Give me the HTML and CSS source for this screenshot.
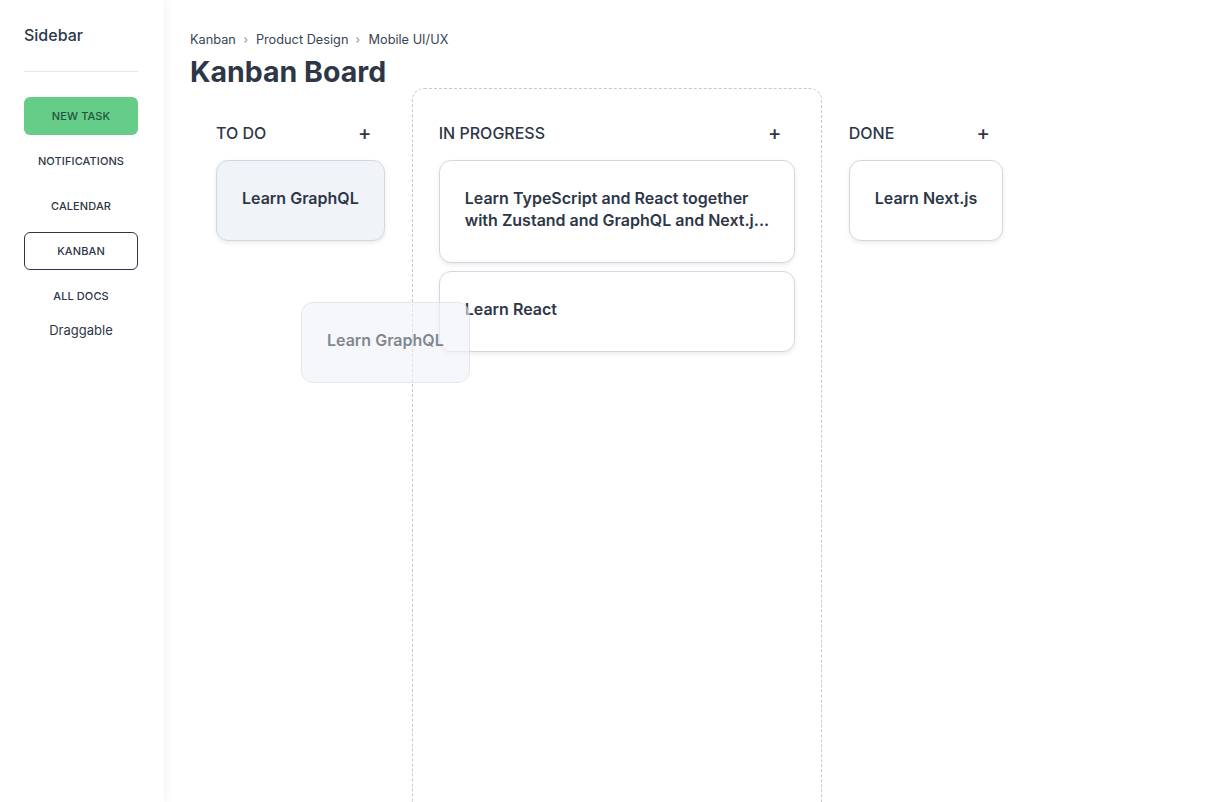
FILE: index.html
```html
<!DOCTYPE html>
<html lang="en">
<head>
<meta charset="utf-8">
<title>Kanban Board</title>
<link rel="stylesheet" href="styles.css">
</head>
<body>
<div class="app">
  <aside class="sidebar">
    <div class="sidebar-title">Sidebar</div>
    <hr class="divider">
    <nav class="nav">
      <button class="nav-btn primary">NEW TASK</button>
      <button class="nav-btn">NOTIFICATIONS</button>
      <button class="nav-btn">CALENDAR</button>
      <button class="nav-btn active">KANBAN</button>
      <button class="nav-btn">ALL DOCS</button>
      <a class="nav-link">Draggable</a>
    </nav>
  </aside>
  <main class="main">
    <div class="breadcrumb">
      <span>Kanban</span>
      <svg class="chev" viewBox="0 0 8 8" width="8" height="8"><path d="M2.5 1.5 L5 4 L2.5 6.5" fill="none" stroke="#9ca3af" stroke-width="1.1"/></svg>
      <span>Product Design</span>
      <svg class="chev" viewBox="0 0 8 8" width="8" height="8"><path d="M2.5 1.5 L5 4 L2.5 6.5" fill="none" stroke="#9ca3af" stroke-width="1.1"/></svg>
      <span>Mobile UI/UX</span>
    </div>
    <h1 class="title">Kanban Board</h1>
    <div class="board">
      <section class="column">
        <div class="col-head"><span>TO DO</span><span class="add">+</span></div>
        <div class="card placeholder"><div class="card-text">Learn GraphQL</div></div>
      </section>
      <section class="column over">
        <div class="col-head"><span>IN PROGRESS</span><span class="add">+</span></div>
        <div class="card wide"><div class="card-text"><span class="line">Learn TypeScript and React together</span><span class="line">with Zustand and GraphQL and Next.j...</span></div></div>
        <div class="card wide"><div class="card-text">Learn React</div></div>
      </section>
      <section class="column">
        <div class="col-head"><span>DONE</span><span class="add">+</span></div>
        <div class="card"><div class="card-text">Learn Next.js</div></div>
      </section>
      <div class="card drag-overlay"><div class="card-text">Learn GraphQL</div></div>
    </div>
  </main>
</div>
</body>
</html>
```

FILE: styles.css
```css
* { box-sizing: border-box; }
html, body { margin: 0; padding: 0; background: #fff; }
body {
  font-family: Inter, "Noto Sans", sans-serif;
  color: #2d3748;
  overflow: hidden;
}
.app { display: flex; height: 802px; overflow: hidden; }
.sidebar {
  width: 164px;
  flex: none;
  padding: 24px 26px 0 24px;
  background: #fff;
  box-shadow: 3px 0 8px rgba(0,0,0,0.045);
  position: relative;
  z-index: 2;
}
.sidebar-title {
  font-size: 16px;
  font-weight: 500;
  line-height: 22px;
  color: #2d3748;
}
.divider {
  border: 0;
  border-top: 1px solid #e5e7eb;
  margin: 25px 0 25px 0;
}
.nav { display: flex; flex-direction: column; gap: 7px; }
.nav-btn {
  height: 38px;
  border: 1px solid transparent;
  border-radius: 6px;
  background: transparent;
  font-family: Inter, sans-serif;
  font-size: 11px;
  font-weight: 500;
  color: #2d3748;
  letter-spacing: 0.1px;
  padding: 0;
}
.nav-btn.primary { background: #66cd89; color: #22543d; }
.nav-btn.active { border-color: #2d3748; }
.nav-link {
  text-align: center;
  font-size: 13px;
  line-height: 16px;
  color: #2d3748;
}
.main { flex: 1; padding: 31px 0 0 26px; position: relative; }
.breadcrumb {
  display: flex;
  align-items: center;
  gap: 6px;
  font-size: 12.75px;
  line-height: 18px;
  color: #3a4454;
}
.chev { display: block; }
.title {
  margin: 5px 0 0 0;
  font-size: 28.5px;
  line-height: 36px;
  font-weight: 700;
  color: #2d3748;
}
.board {
  display: flex;
  align-items: flex-start;
  position: relative;
  margin-top: -2px;
  margin-left: -1px;
}
.column {
  border: 1px dashed transparent;
  border-radius: 12px;
  padding: 26px;
  display: flex;
  flex-direction: column;
  gap: 8px;
  min-height: 760px;
}
.column.over { border-color: #c9c9c9; }
.col-head {
  height: 36px;
  margin-bottom: 1px;
  display: flex;
  align-items: center;
  justify-content: space-between;
  font-size: 16px;
  font-weight: 500;
  color: #2d3748;
}
.add {
  width: 40px;
  text-align: center;
  font-size: 20px;
  font-weight: 500;
  line-height: 20px;
}
.card {
  background: #fff;
  border: 1px solid #d4d7df;
  border-radius: 12px;
  padding: 26px 25px 31px;
  box-shadow: 0 2px 4px rgba(0,0,0,0.08);
  max-width: 356px;
  align-self: flex-start;
}
.card.wide { width: 356px; }
.card-text {
  font-size: 16px;
  font-weight: 600;
  line-height: 22px;
  color: #2d3748;
}
.line { display: block; white-space: nowrap; }
.card.placeholder { background: #f0f3f8; }
.drag-overlay {
  position: absolute;
  left: 112px;
  top: 214px;
  background: #f0f3f8;
  opacity: 0.6;
  box-shadow: none;
  z-index: 5;
}
```
